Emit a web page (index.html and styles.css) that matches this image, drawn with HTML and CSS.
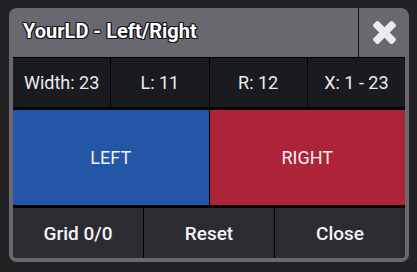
FILE: index.html
```html
<!DOCTYPE html>
<html>
<head>
<meta charset="utf-8">
<link rel="stylesheet" href="styles.css">
</head>
<body>
<div class="dialog">
  <div class="header">
    <div class="title">YourLD - Left/Right</div>
    <div class="close">
      <svg class="x-icon" viewBox="302 366 1188 1188" width="23" height="23"><path fill="#ececec" d="M1490 1322q0 40-28 68l-136 136q-28 28-68 28t-68-28l-294-294-294 294q-28 28-68 28t-68-28l-136-136q-28-28-28-68t28-68l294-294-294-294q-28-28-28-68t28-68l136-136q28-28 68-28t68 28l294 294 294-294q28-28 68-28t68 28l136 136q28 28 28 68t-28 68l-294 294 294 294q28 28 28 68z"/></svg>
    </div>
  </div>
  <div class="content">
    <div class="info">
      <div class="cell">Width: 23</div>
      <div class="cell">L: 11</div>
      <div class="cell">R: 12</div>
      <div class="cell">X: 1 - 23</div>
    </div>
    <div class="sides">
      <div class="side left">LEFT</div>
      <div class="side right">RIGHT</div>
    </div>
    <div class="buttons">
      <div class="btn">Grid 0/0</div>
      <div class="btn">Reset</div>
      <div class="btn">Close</div>
    </div>
  </div>
</div>
</body>
</html>
```

FILE: styles.css
```css
html, body {
  margin: 0;
  padding: 0;
}
body {
  background: #222225;
  padding: 8px 0 0 9px;
  font-family: Roboto, "Liberation Sans", sans-serif;
  width: 417px;
  height: 272px;
  box-sizing: border-box;
}
.dialog {
  width: 400px;
  height: 254px;
  background: #68686e;
  border-radius: 8px;
  display: flex;
  flex-direction: column;
}
.header {
  height: 49px;
  display: flex;
}
.title {
  flex: 1;
  display: flex;
  align-items: center;
  padding: 0 0 3px 14px;
  color: #ffffff;
  font-weight: 700;
  font-size: 20px;
  text-shadow: 1px 0 0 #151515, -1px 0 0 #151515, 0 1px 0 #151515, 0 -1px 0 #151515,
    1px 1px 0 #151515, -1px -1px 0 #151515, 1px -1px 0 #151515, -1px 1px 0 #151515;
}
.close {
  width: 50px;
  border-left: 1px solid #111113;
  display: flex;
  align-items: center;
  justify-content: center;
}
.content {
  margin: 0 4px 4px 4px;
  background: #000000;
  padding-top: 1px;
  display: grid;
  grid-template-rows: 49px 95px 50px;
  row-gap: 3px;
  border-radius: 0 0 4px 4px;
  overflow: hidden;
}
.info {
  display: grid;
  grid-template-columns: repeat(4, 1fr);
  column-gap: 1px;
}
.cell {
  background: #1a1a21;
  color: #ececec;
  font-size: 18px;
  display: flex;
  align-items: center;
  justify-content: center;
}
.sides {
  display: grid;
  grid-template-columns: 1fr 1fr;
  column-gap: 1px;
}
.side {
  color: #f2f2f2;
  font-size: 18px;
  display: flex;
  align-items: center;
  justify-content: center;
}
.left {
  background: #2456a8;
}
.right {
  background: #ad2337;
}
.buttons {
  display: grid;
  grid-template-columns: repeat(3, 1fr);
  column-gap: 1px;
}
.btn {
  background: #2b2b31;
  color: #f4f4f4;
  font-size: 19px;
  font-weight: 500;
  display: flex;
  align-items: center;
  justify-content: center;
}
```
